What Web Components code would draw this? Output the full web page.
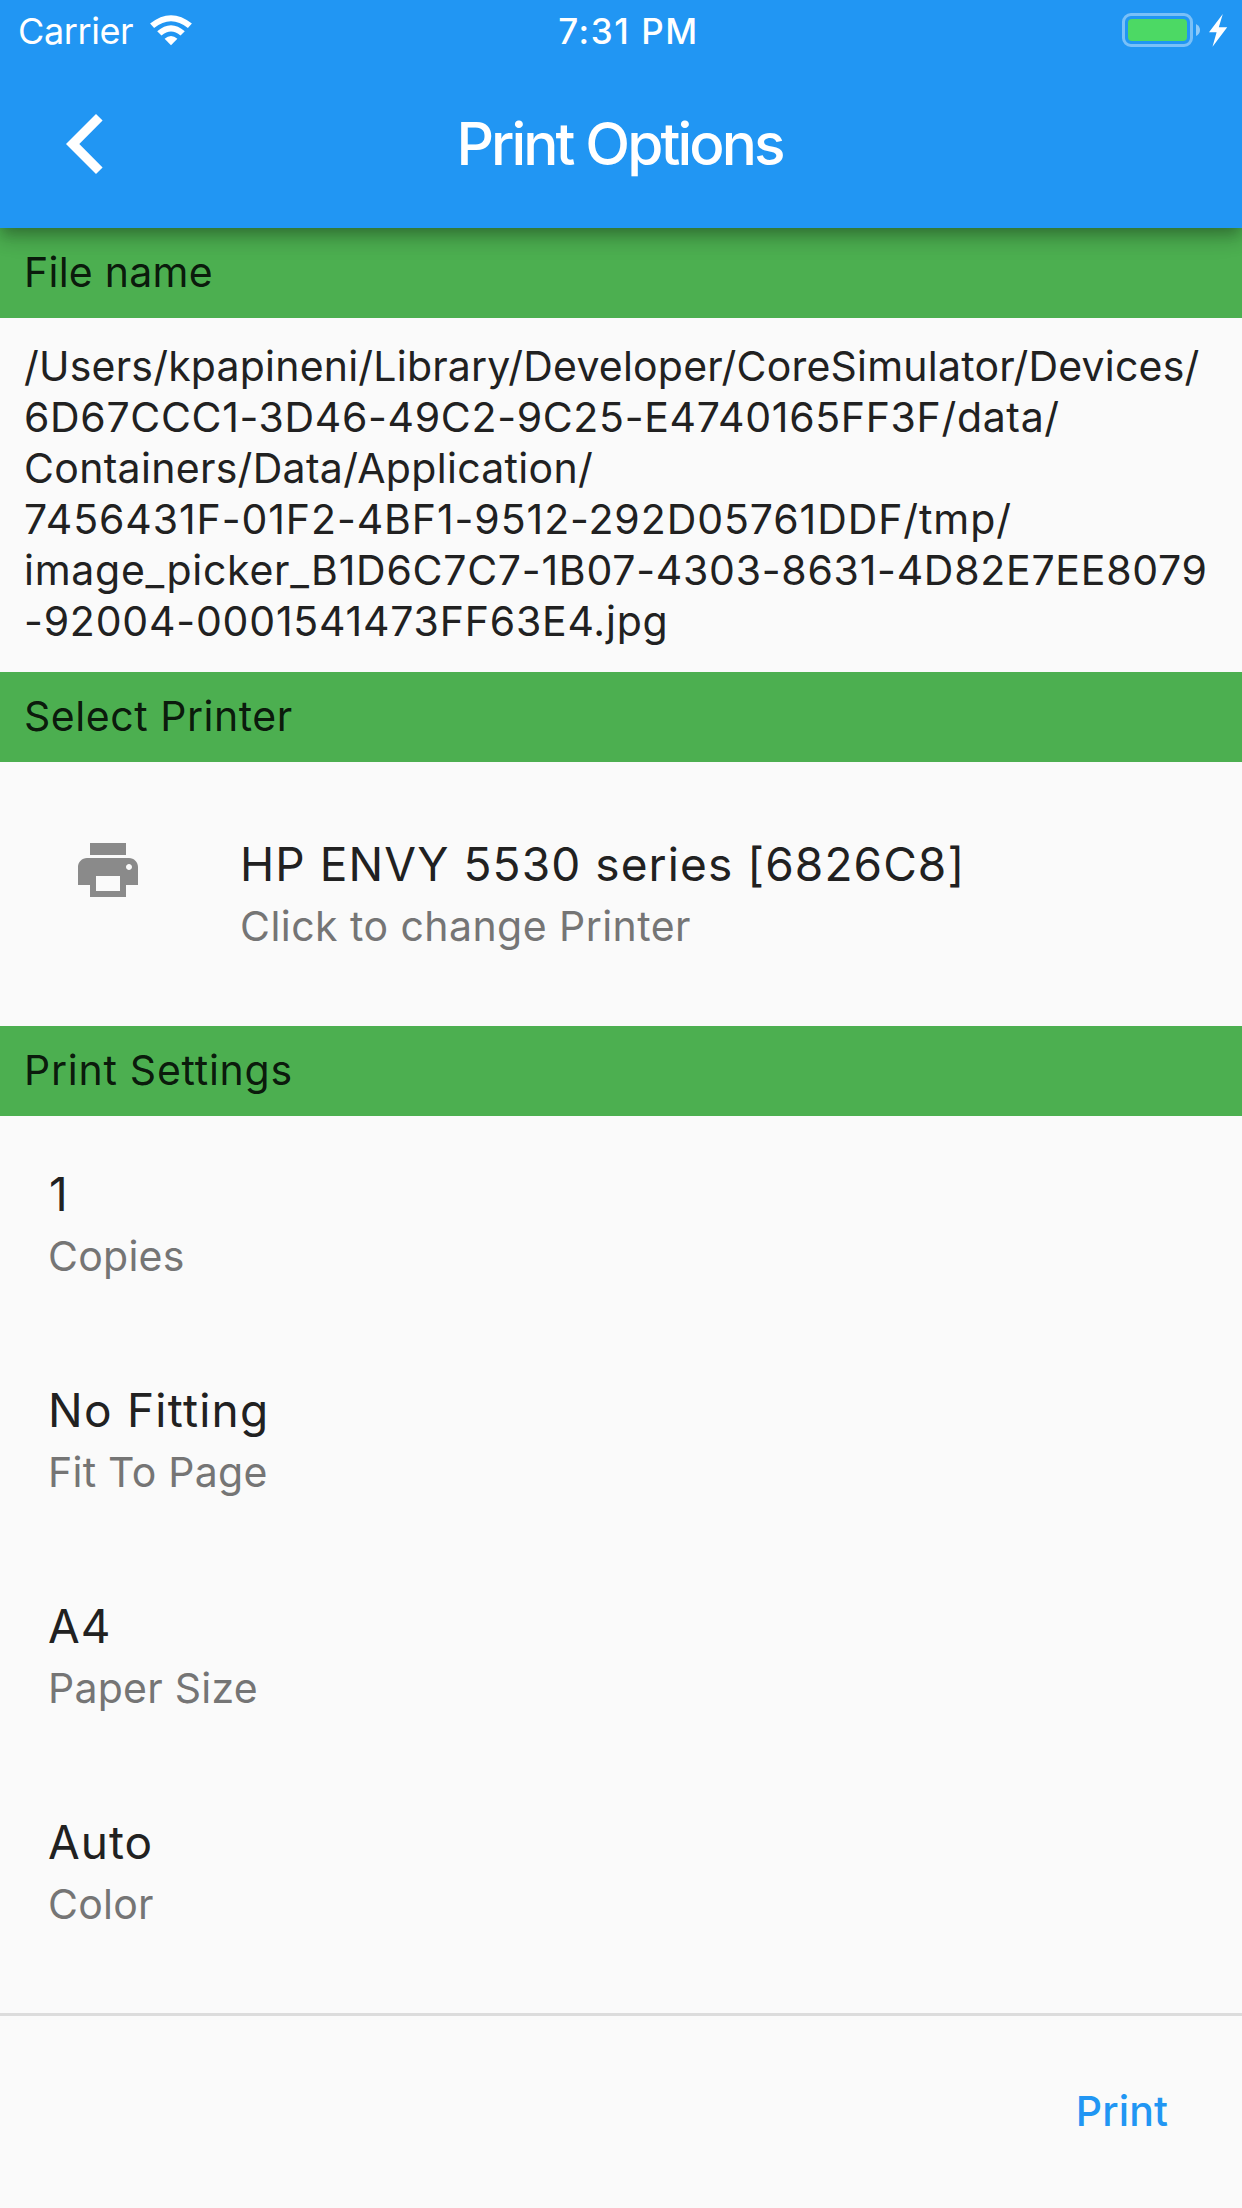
<!DOCTYPE html>
<html lang="en">
<head>
<meta charset="utf-8">
<title>Print Options</title>
<style>
  html, body { margin: 0; padding: 0; }
  body {
    width: 1242px; height: 2208px; overflow: hidden;
    background: #fafafa; color: #212121;
    font-family: Inter, "Liberation Sans", sans-serif;
    font-feature-settings: "calt" 0;
  }
</style>
</head>
<body>
<print-screen>
  <app-bar slot="header">
    <status-bar slot="status" carrier="Carrier" time="7:31 PM"></status-bar>
    Print Options
  </app-bar>
  <section-header style="letter-spacing:.25px">File name</section-header>
  <file-path>
    <div style="letter-spacing:.209px">/Users/kpapineni/Library/Developer/CoreSimulator/Devices/</div>
    <div style="letter-spacing:.668px">6D67CCC1-3D46-49C2-9C25-E4740165FF3F/data/</div>
    <div style="letter-spacing:.308px">Containers/Data/Application/</div>
    <div style="letter-spacing:.92px">7456431F-01F2-4BF1-9512-292D05761DDF/tmp/</div>
    <div style="letter-spacing:.74px">image_picker_B1D6C7C7-1B07-4303-8631-4D82E7EE8079</div>
    <div style="letter-spacing:.792px">-92004-0001541473FF63E4.jpg</div>
  </file-path>
  <section-header style="letter-spacing:.54px">Select Printer</section-header>
  <list-tile class="printer" style="--title-track:1.1px;--sub-track:.445px">
    <printer-icon slot="leading"></printer-icon>
    HP ENVY 5530 series [6826C8]
    <span slot="subtitle">Click to change Printer</span>
  </list-tile>
  <section-header style="letter-spacing:.75px">Print Settings</section-header>
  <list-tile style="--title-indent:1px">1<span slot="subtitle">Copies</span></list-tile>
  <list-tile style="--title-track:1.25px">No Fitting<span slot="subtitle">Fit To Page</span></list-tile>
  <list-tile style="--title-track:.9px">A4<span slot="subtitle">Paper Size</span></list-tile>
  <list-tile style="--title-track:1px">Auto<span slot="subtitle">Color</span></list-tile>
  <footer-bar slot="footer">Print</footer-bar>
</print-screen>

<script>
  const define = (name, html) => {
    const template = document.createElement('template');
    template.innerHTML = html;
    customElements.define(name, class extends HTMLElement {
      constructor() {
        super();
        this.attachShadow({ mode: 'open' }).append(template.content.cloneNode(true));
      }
      connectedCallback() {
        for (const node of this.shadowRoot.querySelectorAll('[data-attr]'))
          node.textContent = this.getAttribute(node.dataset.attr);
      }
    });
  };

  define('print-screen', `
    <style>
      :host { display: flex; flex-direction: column; width: 1242px; height: 2208px; }
      main { flex: 1; min-height: 0; overflow: hidden; }
      ::slotted(list-tile.printer) { padding-top: 24px; padding-bottom: 24px; }
    </style>
    <slot name="header"></slot>
    <main><slot></slot></main>
    <slot name="footer"></slot>`);

  define('app-bar', `
    <style>
      :host { display: block; box-sizing: border-box; height: 228px; background: #2196f3; color: #fff;
              position: relative; z-index: 1;
              box-shadow: 0 6px 12px -3px rgba(0,0,0,.2), 0 12px 15px 0 rgba(0,0,0,.14), 0 3px 30px 0 rgba(0,0,0,.12); }
      nav { display: grid; grid-template-columns: 168px 1fr 168px; align-items: center; height: 168px; }
      svg { display: block; margin-left: 60px; }
      h1 { margin: 0; text-align: center; font-size: 58.5px; font-weight: 500; line-height: 72px;
           letter-spacing: -2.91px; padding: 0 3px 0 0; }
    </style>
    <slot name="status"></slot>
    <nav>
      <svg width="48" height="72" viewBox="0 0 48 72"><path fill="#fff" d="M6 36 36 6l6.6 6.4L19.3 36l23.3 23.6L36 66z"/></svg>
      <h1><slot></slot></h1>
    </nav>`);

  define('status-bar', `
    <style>
      :host { display: grid; grid-template-columns: 1fr auto 1fr; grid-template-rows: 60px; align-items: start; height: 60px; }
      .left { display: flex; align-items: flex-start; padding-left: 18px; font-size: 36px; letter-spacing: -.4px; }
      .left span, .time { line-height: 62px; }
      .left svg { margin-left: 15.5px; }
      .time { font-size: 35px; font-weight: 500; letter-spacing: 1.55px; padding-left: 15px; }
      .right { display: flex; justify-content: flex-end; padding-right: 14px; }
      svg { display: block; }
    </style>
    <div class="left"><span data-attr="carrier"></span>
      <svg width="44" height="60" viewBox="149 0 44 60" fill="#fff">
        <path d="M150.1 23.6 Q171 6.8 191.9 23.6 L187.9 28 Q171 14.5 154.1 28Z"/>
        <path d="M157.2 31.3 Q171 19.2 184.8 31.3 L180.5 35.6 Q171 27.4 161.5 35.6Z"/>
        <path d="M164.6 38.8 Q171 33 177.4 38.8 L171 45.2Z"/>
      </svg></div>
    <div class="time" data-attr="time"></div>
    <div class="right">
      <svg width="108" height="60" viewBox="1120 0 108 60">
        <rect x="1123.5" y="14.5" width="68" height="31" rx="7.5" fill="none" stroke="#fff" stroke-opacity=".4" stroke-width="3"/>
        <rect x="1128" y="19" width="59" height="22" rx="4" fill="#4cd964"/>
        <path d="M1196 24q4 2 4 6t-4 6z" fill="#fff" fill-opacity=".5"/>
        <path d="M1222.8 14 1209 32.3h7.6L1212.5 46.8 1227.2 27.3h-8.4z" fill="#fff"/>
      </svg></div>`);

  define('section-header', `
    <style>
      :host { display: block; box-sizing: border-box; height: 90px; padding: 19px 24px 0; background: #4caf50;
              color: rgba(0,0,0,.87); font-size: 41px; line-height: 51px; }
    </style><slot></slot>`);

  define('file-path', `
    <style>
      :host { display: block; padding: 23px 24px 25px; font-size: 41px; line-height: 51px; white-space: nowrap; }
    </style><slot></slot>`);

  define('list-tile', `
    <style>
      :host { display: flex; align-items: flex-start; }
      ::slotted([slot=leading]) { margin: 48px 96px 0 72px; }
      .body { box-sizing: border-box; height: 216px; padding-top: 48px; }
      .title { font-size: 46px; line-height: 60px; letter-spacing: var(--title-track, 0);
               text-indent: var(--title-indent, 0); }
      .sub { margin-top: 7px; font-size: 41px; line-height: 51px; color: #757575; letter-spacing: var(--sub-track, .26px); }
      :host(:not(.printer)) .body { padding-left: 48px; }
    </style>
    <slot name="leading"></slot>
    <div class="body">
      <div class="title"><slot></slot></div>
      <div class="sub"><slot name="subtitle"></slot></div>
    </div>`);

  define('printer-icon', `
    <style>:host { display: block; width: 72px; height: 72px; } svg { display: block; }</style>
    <svg width="72" height="72" viewBox="0 0 24 24" fill="#8a8a8a"><path d="M19 8H5c-1.66 0-3 1.34-3 3v6h4v4h12v-4h4v-6c0-1.66-1.34-3-3-3zm-3 11H8v-5h8v5zm3-7c-.55 0-1-.45-1-1s.45-1 1-1 1 .45 1 1-.45 1-1 1zm-1-9H6v4h12V3z"/></svg>`);

  define('footer-bar', `
    <style>
      :host { display: flex; justify-content: flex-end; align-items: center; box-sizing: border-box; height: 195px;
              border-top: 3px solid #dcdcdc; padding: 0 74px 2px 0; }
      button { all: unset; color: #2196f3; font-size: 41px; font-weight: 500; line-height: 51px; letter-spacing: .1px; }
    </style>
    <button><slot></slot></button>`);
</script>
</body>
</html>
